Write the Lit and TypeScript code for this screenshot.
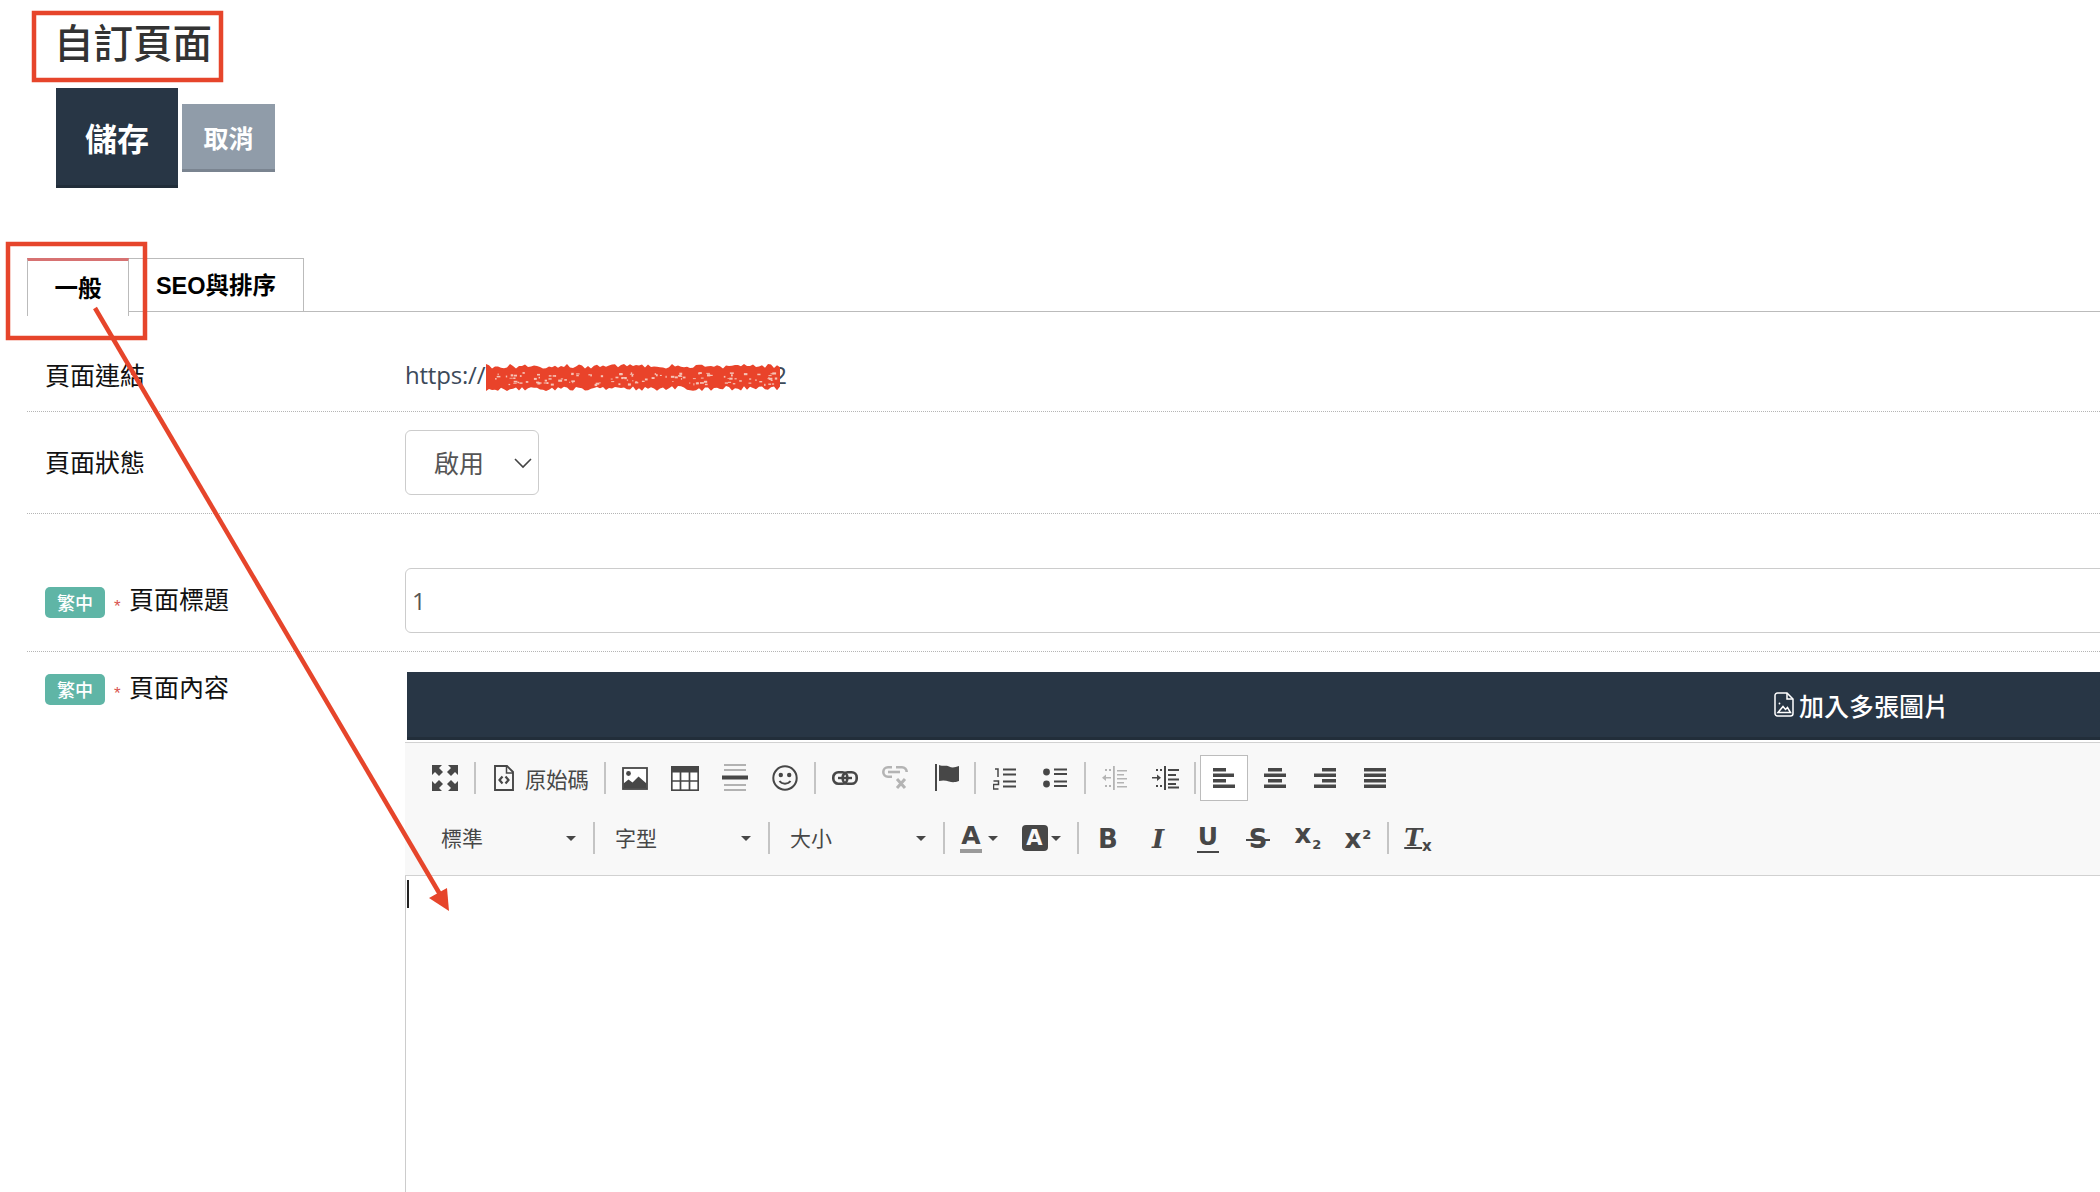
import { LitElement, html, css, svg } from "lit";
import { customElement } from "lit/decorators.js";

function rng(seed: number) {
  let s = seed;
  return () => {
    s = (s * 16807) % 2147483647;
    return s / 2147483647;
  };
}

function scribble() {
  const r = rng(4242);
  const x0 = 486, x1 = 782;
  let top = `M${x0} 370`;
  let bottom = "";
  for (let x = x0; x <= x1; x += 3) {
    top += ` L${x} ${(364 + r() * 4.5).toFixed(1)}`;
    bottom = ` L${x} ${(386 + r() * 5).toFixed(1)}` + bottom;
  }
  const d = top + bottom + "Z";
  const specks: { x: number; y: number; w: number; h: number }[] = [];
  for (let i = 0; i < 120; i++) {
    specks.push({
      x: x0 + 6 + r() * (x1 - x0 - 10),
      y: 372 + r() * 12,
      w: 1 + r() * 3,
      h: 0.8 + r() * 1.4,
    });
  }
  return { d, specks };
}

const I = {
  fullscreen: html`<svg width="26" height="26" viewBox="0 0 26 26" fill="currentColor"><path d="M0 0h10L7 3l4 4-4 4-4-4-3 3z"/><path d="M26 0v10l-3-3-4 4-4-4 4-4-3-3z"/><path d="M0 26V16l3 3 4-4 4 4-4 4 3 3z"/><path d="M26 26H16l3-3-4-4 4-4 4 4 3-3z"/></svg>`,
  source: html`<svg width="20" height="26" viewBox="0 0 20 26" fill="none" stroke="currentColor"><path stroke-width="1.900" d="M1 1h12l6 6v18H1z"/><path stroke-width="1.500" d="M12.500 1v7h6.500"/><path stroke-width="2.200" d="M8.500 11.500l-3 3.500 3 3.500M11.500 11.500l3 3.500-3 3.500"/></svg>`,
  image: html`<svg width="26" height="23" viewBox="0 0 26 23"><rect x="1" y="1" width="24" height="21" fill="#fff" stroke="currentColor" stroke-width="1.800"/><circle cx="6.500" cy="6.500" r="2.400" fill="currentColor"/><path fill="currentColor" d="M1.500 21.500v-5l5-4 4 3 6-6 8 7v5z"/></svg>`,
  table: html`<svg width="28" height="25" viewBox="0 0 28 25" fill="none" stroke="currentColor"><rect x=".8" y=".8" width="26.400" height="23.400" fill="#fff" stroke-width="1.700"/><rect x=".5" y=".5" width="27" height="6" fill="currentColor" stroke="none"/><path stroke-width="1.700" d="M9.500 6v18M18.500 6v18M1 15h26"/></svg>`,
  hr: html`<svg width="26" height="28" viewBox="0 0 26 28"><path stroke="#9a9a9a" stroke-width="1.500" d="M2 1h22M2 6h22M2 21h22M2 26h22"/><rect y="11.500" width="26" height="4" fill="currentColor"/></svg>`,
  smiley: html`<svg width="26" height="26" viewBox="0 0 26 26" fill="none" stroke="currentColor"><circle cx="13" cy="13" r="11.700" stroke-width="2"/><circle cx="8.800" cy="10" r="2.200" fill="currentColor" stroke="none"/><circle cx="17.200" cy="10" r="2.200" fill="currentColor" stroke="none"/><path stroke-width="2" d="M7.500 16c2.500 3.500 8.500 3.500 11 0"/></svg>`,
  link: html`<svg width="26" height="14" viewBox="0 0 26 14" fill="none" stroke="currentColor"><rect x="1.300" y="1.300" width="14" height="11.400" rx="5" stroke-width="2.600"/><rect x="10.700" y="1.300" width="14" height="11.400" rx="5" stroke-width="2.600"/><path d="M6 7h14" stroke-width="2.400"/></svg>`,
  unlink: html`<svg width="26" height="26" viewBox="0 0 26 26" fill="none" stroke="currentColor" stroke-width="2.600"><path d="M10 2.300H6a4.700 4.700 0 000 9.400h4"/><path d="M14 2.300h6a4.700 4.700 0 014.700 4.700"/><path d="M6 7h12"/><path stroke-width="3" d="M15 14l8 9M23 14l-8 9"/></svg>`,
  flag: html`<svg width="26" height="28" viewBox="0 0 26 28"><rect x="1" y="0" width="2" height="27" fill="currentColor"/><path fill="currentColor" d="M5 1c4 1.500 7 0 10 1.500s6 1 10-.5v15c-4 1.500-7 1.500-10 .5s-6-1.500-10-.5z"/></svg>`,
  ol: html`<svg width="24" height="26" viewBox="0 0 24 26"><path fill="none" stroke="currentColor" stroke-width="1.500" d="M2 4h3v8M.5 16h5v3.500h-5V24h5"/><path stroke="currentColor" stroke-width="2" d="M10 4.500h13M10 9.500h13M10 16.500h13M10 21.500h13"/></svg>`,
  ul: html`<svg width="24" height="24" viewBox="0 0 24 24"><circle cx="3.500" cy="6" r="3.400" fill="currentColor"/><circle cx="3.500" cy="18" r="3.400" fill="currentColor"/><path stroke="currentColor" stroke-width="2" d="M11 3.500h13M11 8h13M11 15.500h13M11 20h13"/></svg>`,
  outdent: html`<svg width="26" height="26" viewBox="0 0 26 26" fill="currentColor"><rect x="11" y="1" width="1.800" height="24"/><path d="M15 5h10v1.600H15zM15 9h7v1.600h-7zM15 13h10v1.600H15zM15 17h7v1.600h-7zM15 21h10v1.600H15z"/><path d="M0 12.700l4-3.200V12h5v1.500H4V16z"/><path d="M3 4h2v2H3zM7 4h2v2H7zM3 20h2v2H3zM7 20h2v2H7z"/></svg>`,
  indent: html`<svg width="27" height="26" viewBox="0 0 27 26" fill="currentColor"><rect x="12" y="1" width="2" height="24"/><path d="M16 4h11v2H16zM16 9h8v2h-8zM16 13.500h11v2H16zM16 18h8v2h-8zM16 21.500h11v2H16z"/><path d="M9 12.700l-4-3.200V12H0v1.500h5V16z"/><path d="M4 4h2v2H4zM8 4h2v2H8zM4 20h2v2H4zM8 20h2v2H8z"/></svg>`,
  al: html`<svg width="24" height="22" viewBox="0 0 24 22" fill="currentColor"><path d="M1 1h13v3.600H1zM1 6.500h21v3.600H1zM1 12h13v3.600H1zM1 17.500h22v3.600H1z"/></svg>`,
  ac: html`<svg width="24" height="22" viewBox="0 0 24 22" fill="currentColor"><path d="M5 1h14v3.600H5zM1 6.500h22v3.600H1zM5 12h14v3.600H5zM1 17.500h22v3.600H1z"/></svg>`,
  ar: html`<svg width="24" height="22" viewBox="0 0 24 22" fill="currentColor"><path d="M9 1h14v3.600H9zM1 6.500h22v3.600H1zM9 12h14v3.600H9zM1 17.500h22v3.600H1z"/></svg>`,
  aj: html`<svg width="24" height="22" viewBox="0 0 24 22" fill="currentColor"><path d="M1 1h22v3.600H1zM1 6.500h22v3.600H1zM1 12h22v3.600H1zM1 17.500h22v3.600H1z"/></svg>`,
  docImage: html`<svg width="20" height="25" viewBox="0 0 20 25" fill="none" stroke="currentColor" stroke-width="1.500"><path d="M3.500 1H13l6 6v14.500a2.500 2.500 0 01-2.500 2.500h-13A2.500 2.500 0 011 21.500v-18A2.500 2.500 0 013.500 1z"/><path d="M13 1v6h6"/><circle cx="5.500" cy="11.500" r=".9" fill="currentColor" stroke="none"/><path d="M4 20.500l5-6 2.500 3 2-2 3 5z"/></svg>`,
};

const sep = html`<span class="sep"></span>`;
const btn = (icon: unknown, cls = "") => html`<span class="btn ${cls}">${icon}</span>`;
const caret = html`<span class="caret"></span>`;

@customElement("app-root")
export class AppRoot extends LitElement {
  static styles = css`
    :host {
      display: block;
      position: relative;
      width: 2100px;
      height: 1192px;
      overflow: hidden;
      background: #fff;
      font-family: "Noto Sans CJK TC", "Liberation Sans", sans-serif;
      color: #111;
    }
    .head { padding: 11px 0 0 56px; }
    h1 {
      margin: 0 0 0 -2px;
      height: 77px;
      line-height: 60px;
      font-size: 39.500px;
      font-weight: 500;
      color: #333;
    }
    .actions { display: flex; align-items: center; gap: 4px; }
    .save, .cancel {
      display: flex;
      align-items: center;
      justify-content: center;
      box-sizing: border-box;
      color: #fff;
      font-weight: 700;
    }
    .save {
      width: 122px;
      height: 100px;
      background: #283645;
      border-bottom: 3px solid #212d39;
      font-size: 32px;
    }
    .cancel {
      width: 93px;
      height: 68px;
      background: #909ca9;
      border-bottom: 3px solid #7a8490;
      font-size: 25px;
    }
    .tabs {
      display: flex;
      margin: 70px 0 0 27px;
      height: 53px;
      border-bottom: 1px solid #bbb;
    }
    .tab {
      box-sizing: border-box;
      display: flex;
      align-items: center;
      justify-content: center;
      font: 700 23.500px "Liberation Sans", "Noto Sans CJK TC", sans-serif;
      color: #000;
    }
    .tab.on {
      width: 102px;
      height: 58px;
      border: 1px solid #bbb;
      border-top: 3px solid #d77272;
      border-bottom: 0;
      background: #fff;
      margin-right: -1px;
      position: relative;
      padding-bottom: 4px;
    }
    .tab.off {
      width: 176px;
      height: 53px;
      border: 1px solid #bbb;
      border-bottom: 0;
      padding-bottom: 2px;
    }
    .content { margin-left: 27px; padding-top: 28px; }
    .row {
      display: grid;
      grid-template-columns: 378px 1fr;
      border-bottom: 1px dotted #b5b5b5;
    }
    .row.last { border-bottom: 0; }
    .label {
      display: flex;
      align-items: flex-start;
      padding-left: 18px;
      font-size: 25px;
      line-height: 31px;
      color: #111;
    }
    .ltext { margin-top: -3px; }
    .r1 { height: 71px; align-items: center; }
    .r2 { height: 101px; align-items: center; }
    .r2 .ltext { margin-top: -2px; }
    .r3 { height: 138px; padding-top: 36px; box-sizing: border-box; align-items: center; }
    .r3 .label { padding-top: 4px; }
    .r3 .ltext { margin-top: -4px; }
    .r4 { padding-top: 20px; align-items: start; }
    .r4 .label { padding-top: 2px; }
    .url {
      font: 24px "Open Sans", sans-serif;
      color: #3c4a5a;
      letter-spacing: -0.2px;
      display: flex;
      white-space: pre;
      margin-bottom: 3px;
    }
    .gap { display: inline-block; width: 288px; }
    .select {
      box-sizing: border-box;
      width: 134px;
      height: 65px;
      border: 1px solid #ccc;
      border-radius: 6px;
      display: flex;
      align-items: center;
      justify-content: space-between;
      padding: 0 5px 0 28px;
      font-size: 25px;
      color: #555;
    }
    .select span { margin-bottom: 2px; }
    .input {
      box-sizing: border-box;
      height: 65px;
      margin-right: -10px;
      border: 1px solid #ccc;
      border-radius: 6px;
      display: flex;
      align-items: center;
      padding-left: 6px;
      font: 24px "Open Sans", sans-serif;
      color: #555;
    }
    .badge {
      width: 60px;
      height: 31px;
      background: #5fb5a6;
      border-radius: 5px;
      color: #fff;
      font-size: 18px;
      font-weight: 500;
      display: flex;
      align-items: center;
      justify-content: center;
    }
    .star {
      color: #d9534f;
      font: 17px/16px "Liberation Sans", sans-serif;
      margin: 0 7px 0 9px;
      width: 8px;
      padding-top: 12px;
    }
    .editor { margin-right: -10px; }
    .bar {
      box-sizing: border-box;
      margin-left: 2px;
      height: 68px;
      background: #283645;
      border-bottom: 3px solid #222e3a;
      color: #fff;
      display: flex;
      align-items: center;
      gap: 5px;
      padding-left: 1367px;
      font-size: 25px;
      font-weight: 500;
    }
    .toolbar {
      margin-top: 2px;
      height: 134px;
      box-sizing: border-box;
      background: #f8f8f8;
      border-top: 1px solid #d1d1d1;
      border-bottom: 1px solid #d1d1d1;
      padding: 5px 0 0 15px;
      color: #474747;
    }
    .tr { display: flex; height: 60px; align-items: center; }
    .btn {
      width: 50px;
      height: 46px;
      box-sizing: border-box;
      display: flex;
      align-items: center;
      justify-content: center;
      flex: none;
    }
    .btn.off { color: #b4b4b4; }
    .btn.flag { padding-left: 4px; }
    .btn.active {
      width: 48px;
      margin-right: 2px;
      background: #fff;
      border: 1px solid #bcbcbc;
    }
    .btn.src { width: 120px; justify-content: flex-start; padding-left: 14px; gap: 11px; font-size: 21.300px; }
    .sep { width: 10px; flex: none; display: flex; justify-content: center; }
    .sep::after { content: ""; width: 1.500px; height: 32px; background: #c4c4c4; }
    .combo {
      box-sizing: border-box;
      width: 165px;
      height: 46px;
      flex: none;
      display: flex;
      align-items: center;
      justify-content: space-between;
      padding: 0 13px 0 16px;
      font-size: 21px;
    }
    .combo span:first-child { margin-bottom: 2px; }
    .combo.first { width: 169px; padding-left: 21px; }
    .caret {
      width: 0;
      height: 0;
      border: 5px solid transparent;
      border-top: 5px solid #474747;
      border-bottom: 0;
      flex: none;
    }
    .btn.color { width: 60px; gap: 6px; font: 700 25px "DejaVu Sans", sans-serif; }
    .btn.color.bg { width: 64px; gap: 3px; }
    .fa { border-bottom: 4px solid #9a9a9a; line-height: 24px; padding: 0 1px; height: 25px; display: block; }
    .ba {
      background: #474747;
      color: #f8f8f8;
      border-radius: 4px;
      width: 26px;
      height: 26px;
      display: flex;
      align-items: center;
      justify-content: center;
      font-size: 21px;
    }
    .t { font: 700 26px "DejaVu Sans", sans-serif; line-height: 30px; margin-top: 2px; }
    .t.i { font: italic 700 26px/30px "DejaVu Serif", serif; }
    .t.u { border-bottom: 2px solid #474747; font-size: 25px; line-height: 24px; height: 26px; padding: 0 1px; }
    .t.s { position: relative; padding: 0 3px; }
    .t.s::after {
      content: "";
      position: absolute;
      left: 0;
      right: 0;
      top: 15px;
      height: 2px;
      background: #474747;
    }
    .t small { font-size: 13px; vertical-align: -6px; margin-left: 1px; }
    .t sup { font-size: 13px; vertical-align: 9px; line-height: 0; margin-left: 1px; }
    .t.tx { font: italic 700 24px/30px "DejaVu Serif", serif; }
    .t.tx span { text-decoration: underline; text-decoration-thickness: 2px; }
    .t.tx small { font: 700 15px "DejaVu Sans", sans-serif; vertical-align: -5px; margin-left: 0; }
    .body {
      height: 316px;
      border-left: 1px solid #ccc;
      padding: 4px 0 0 1px;
      box-sizing: border-box;
    }
    .cursor { display: block; width: 2px; height: 28px; background: #222; }
    .marks { position: absolute; left: 0; top: 0; pointer-events: none; }
  `;

  render() {
    const sc = scribble();
    return html`
      <div class="head">
        <h1>自訂頁面</h1>
        <div class="actions">
          <div class="save">儲存</div>
          <div class="cancel">取消</div>
        </div>
      </div>
      <div class="tabs">
        <div class="tab on">一般</div>
        <div class="tab off">SEO與排序</div>
      </div>
      <div class="content">
        <div class="row r1">
          <div class="label"><span class="ltext">頁面連結</span></div>
          <div class="url">https://<span class="gap"></span>2</div>
        </div>
        <div class="row r2">
          <div class="label"><span class="ltext">頁面狀態</span></div>
          <div class="select">
            <span>啟用</span>
            <svg width="20" height="12" viewBox="0 0 20 12" fill="none" stroke="#444" stroke-width="1.600"><path d="M2 2l8 8 8-8" /></svg>
          </div>
        </div>
        <div class="row r3">
          <div class="label"><span class="badge">繁中</span><span class="star">*</span><span class="ltext">頁面標題</span></div>
          <div class="input">1</div>
        </div>
        <div class="row r4 last">
          <div class="label"><span class="badge">繁中</span><span class="star">*</span><span class="ltext">頁面內容</span></div>
          <div class="editor">
            <div class="bar">${I.docImage}<span>加入多張圖片</span></div>
            <div class="toolbar">
              <div class="tr">
                ${btn(I.fullscreen)}${sep}
                <span class="btn src">${I.source}<span>原始碼</span></span>${sep}
                ${btn(I.image)}${btn(I.table)}${btn(I.hr)}${btn(I.smiley)}${sep}
                ${btn(I.link)}${btn(I.unlink, "off")}${btn(I.flag, "flag")}${sep}
                ${btn(I.ol)}${btn(I.ul)}${sep}
                ${btn(I.outdent, "off")}${btn(I.indent)}${sep}
                ${btn(I.al, "active")}${btn(I.ac)}${btn(I.ar)}${btn(I.aj)}
              </div>
              <div class="tr">
                <span class="combo first"><span>標準</span>${caret}</span>${sep}
                <span class="combo"><span>字型</span>${caret}</span>${sep}
                <span class="combo"><span>大小</span>${caret}</span>${sep}
                <span class="btn color"><span class="fa">A</span>${caret}</span>
                <span class="btn color bg"><span class="ba">A</span>${caret}</span>${sep}
                ${btn(html`<span class="t">B</span>`)}
                ${btn(html`<span class="t i">I</span>`)}
                ${btn(html`<span class="t u">U</span>`)}
                ${btn(html`<span class="t s">S</span>`)}
                ${btn(html`<span class="t">x<small>2</small></span>`)}
                ${btn(html`<span class="t">x<sup>2</sup></span>`)}${sep}
                ${btn(html`<span class="t tx"><span>T</span><small>x</small></span>`)}
              </div>
            </div>
            <div class="body"><span class="cursor"></span></div>
          </div>
        </div>
      </div>
      <svg class="marks" width="2100" height="1192" viewBox="0 0 2100 1192">
        <g fill="none" stroke="#e6452b">
          <rect x="34" y="13" width="187" height="67" stroke-width="4.500" />
          <rect x="8" y="244" width="137" height="94" stroke-width="4.500" />
          <path d="M95 308L441 896" stroke-width="4.500" />
        </g>
        <path fill="#e6452b" d="M449 911L429 898L447 888Z" />
        <path fill="#e9432a" d=${sc.d} />
        ${sc.specks.map(
          (s) => svg`<rect x=${s.x.toFixed(1)} y=${s.y.toFixed(1)} width=${s.w.toFixed(1)} height=${s.h.toFixed(1)} fill="#f6c4b6" />`
        )}
      </svg>
    `;
  }
}
